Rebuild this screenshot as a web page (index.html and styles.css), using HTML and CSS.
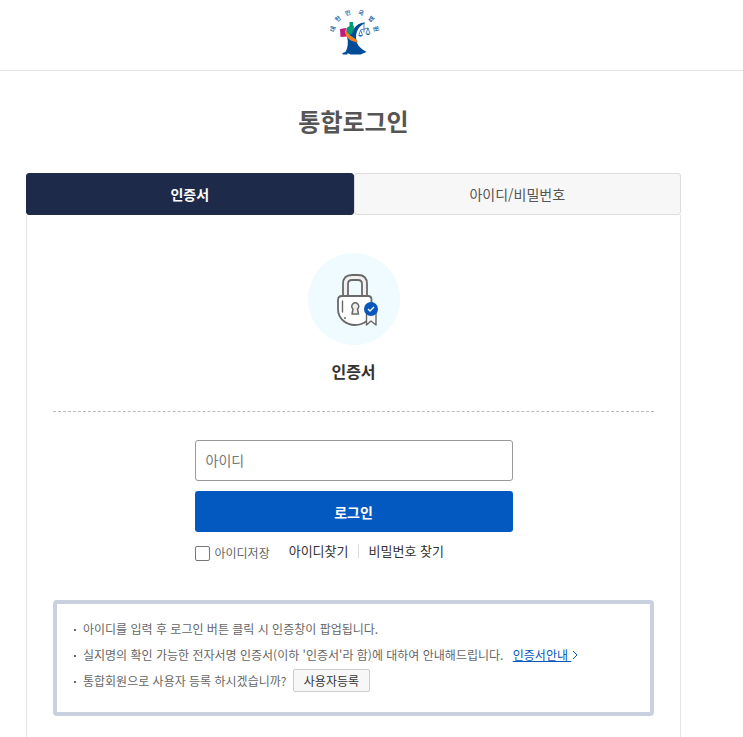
FILE: index.html
```
<!DOCTYPE html>
<html lang="ko">
<head>
  <meta charset="UTF-8"/>
  <meta name="viewport" content="width=device-width,initial-scale=1"/>
  <title>통합로그인</title>
  <link rel="stylesheet" href="styles.css">
</head>
<body>

  <header class="header">
    <a href="#" class="logo" aria-label="대한민국법원">
      <svg width="54" height="52" viewBox="0 0 54 52">
        <g class="logo-text">
          <text transform="translate(6 23) rotate(-75)" y="2">대</text>
          <text transform="translate(11 13) rotate(-45)" y="2">한</text>
          <text transform="translate(21 7) rotate(-15)" y="2">민</text>
          <text transform="translate(34 7) rotate(15)" y="2">국</text>
          <text transform="translate(44 13) rotate(45)" y="2">법</text>
          <text transform="translate(49 23) rotate(75)" y="2">원</text>
        </g>
        <path fill="#009b74" d="M22.500 16h3.500v3.500l1 .5-.5 7-3 4-4-5v-4l3-2z"/>
        <path fill="#004c97" d="M38 16.500c-5 .3-9 2.500-11 6l-2 5-5 3c1.500 6 1 11-1.500 15.500l-3 1v1.500h5v-1.500l3 1.500h10l6-2.500c-5-3-9-6-10-11-.7-4-.5-7 .5-9.500 1-3.500 4-6.500 8-8.200z"/>
        <path fill="#c2187f" d="M13 23l6-1 1.500 8.500-7 .5z"/>
        <path fill="#f08123" d="M18 22.500c1 4 4 6 7.500 8.500 3 1.500 4.500 3 5.500 5.500-5-.5-9-2.500-11.500-6-1.500-2.500-2-5.500-1.500-8z"/>
        <g fill="none" stroke="#2868a8" stroke-width=".8">
          <path d="M37 17.500v9M33.500 24l7.500-2M33.500 24l-1.500 5M33.500 24l2 5M41 22l-2 5.500M41 22l2 5.500"/>
        </g>
        <path fill="#2868a8" d="M31 29h5q-2.500 3.500-5 0zM38.500 27.500h5q-2.500 3.500-5 0z"/>
      </svg>
    </a>
  </header>

  <main class="container">
    <h1 class="title">통합로그인</h1>

    <div class="tabs" role="tablist">
      <button type="button" role="tab" class="tab active" aria-selected="true">인증서</button>
      <button type="button" role="tab" class="tab" aria-selected="false">아이디/비밀번호</button>
    </div>

    <section class="panel">
      <div class="cert">
        <div class="cert-icon">
          <svg width="48" height="56" viewBox="0 0 48 56" fill="none" stroke="#696969" stroke-width="1.8" stroke-linejoin="round">
            <path fill="#f1f1f1" d="M13 25V13Q13 4 22 4h6q9 0 9 9v12h-5V13q0-4-4-4h-6q-4 0-4 4v12z"/>
            <path fill="#fff" d="M12 25h26q3.500 0 3.500 3.500V38c0 11-8 16-16.500 16S8 48 8 38v-9q0-4 4-4z"/>
            <path stroke-linecap="round" stroke-width="1.400" d="M12.500 30v11"/>
            <circle cx="15" cy="47" r="1" fill="#696969" stroke="none"/>
            <path fill="#eee" stroke-width="1.500" d="M23 38a3.500 3.500 0 1 1 4.500 0l1 5h-6.500z"/>
            <path fill="#f7f7f7" stroke-width="1.400" d="M36.500 42v12l4.500-4 5 4V42z"/>
            <circle cx="41" cy="38" r="7" fill="#0757bd" stroke="none"/>
            <path stroke="#fff" stroke-width="1.400" d="M38 38l2 2 4-4"/>
          </svg>
        </div>
        <h2>인증서</h2>
      </div>

      <form class="login-form">
        <input type="text" class="user-id" name="userId" placeholder="아이디" aria-label="아이디">
        <button type="submit" class="btn-login">로그인</button>
        <div class="options">
          <label class="save-id" for="saveId"><input type="checkbox" id="saveId"> 아이디저장</label>
          <div class="find">
            <a href="#">아이디찾기</a>
            <a href="#">비밀번호 찾기</a>
          </div>
        </div>
      </form>

      <ul class="notice">
        <li>아이디를 입력 후 로그인 버튼 클릭 시 인증창이 팝업됩니다.</li>
        <li>실지명의 확인 가능한 전자서명 인증서(이하 '인증서'라 함)에 대하여 안내해드립니다.
          <a href="#" class="guide">인증서안내&nbsp;<svg width="8" height="10" viewBox="0 0 8 10"><path d="M2 1l4 4-4 4" fill="none" stroke="#0757bd"/></svg></a></li>
        <li>통합회원으로 사용자 등록 하시겠습니까? <button type="button" class="btn-join">사용자등록</button></li>
      </ul>
    </section>
  </main>

</body>
</html>
```

FILE: styles.css
```
* { box-sizing: border-box; margin: 0; padding: 0; }

body {
  background: #fff;
  color: #666;
  font-family: "Noto Sans CJK KR", sans-serif;
  font-size: 12px;
  overflow-x: hidden;
}

/* page scrolls without a visible bar */
html { scrollbar-width: none; }

button, input { font-family: inherit; }
a { color: #333; text-decoration: none; }

.header {
  display: flex;
  justify-content: center;
  height: 71px;
  padding: 6px 35px 0 0;
  border-bottom: 1px solid #e5e8eb;
}

.logo-text {
  font-size: 6px;
  font-weight: 700;
  fill: #2868a8;
  text-anchor: middle;
}

.container {
  margin: 0 62px 0 26px;
}

.title {
  padding: 31px 0 33px;
  color: #555;
  font-size: 24px;
  line-height: 38px;
  text-align: center;
}

.tabs { display: flex; }

.tab {
  flex: 1;
  height: 42px;
  border: 1px solid #dcdcdc;
  border-radius: 3px;
  background: #f7f7f7;
  color: #555;
  font-size: 14px;
}

.tab.active {
  border-color: #1e2a4a;
  background: #1e2a4a;
  color: #fff;
  font-weight: 700;
}

.panel {
  padding: 38px 26px;
  border: 1px solid #e3e3e3;
  border-top: 0;
}

.cert {
  padding-bottom: 27px;
  border-bottom: 1px dashed #bbb;
  text-align: center;
}

.cert-icon {
  display: flex;
  align-items: center;
  justify-content: center;
  width: 92px;
  height: 92px;
  margin: 0 auto 13px;
  border-radius: 50%;
  background: #effbfe;
}

.cert h2 {
  color: #333;
  font-size: 16px;
  font-weight: 700;
  line-height: 26px;
}

.login-form {
  max-width: 318px;
  margin: 28px auto 37px;
}

.user-id {
  display: block;
  width: 100%;
  height: 41px;
  padding: 0 10px 2px;
  border: 1px solid #999;
  border-radius: 3px;
  font-size: 14px;
}

.user-id::placeholder { color: #777; }

.btn-login {
  width: 100%;
  height: 41px;
  margin-top: 10px;
  border: 0;
  border-radius: 3px;
  background: #0459c1;
  color: #fff;
  font-size: 14px;
  font-weight: 700;
}

.options {
  display: flex;
  gap: 19px;
  margin-top: 7px;
}

.save-id {
  display: flex;
  align-items: center;
  gap: 5px;
  padding-top: 4px;
  line-height: 20px;
}

.save-id input {
  appearance: none;
  width: 15px;
  height: 15px;
  border: 1px solid #777;
  border-radius: 2px;
  background: #fff;
}

.find {
  display: flex;
  align-items: center;
  height: 24px;
  font-size: 13px;
}

.find a { line-height: 14px; }

.find a + a {
  margin-left: 9px;
  padding-left: 10px;
  border-left: 1px solid #ddd;
}

.notice {
  padding: 12px 16px 18px;
  border: 4px solid #c9d1de;
  border-radius: 4px;
  list-style: none;
}

.notice li {
  position: relative;
  padding-left: 10px;
  line-height: 26px;
}

.notice li::before {
  content: "";
  position: absolute;
  top: 13px;
  left: 1px;
  width: 2px;
  height: 2px;
  background: #666;
}

.guide {
  margin-left: 6px;
  color: #0757bd;
  text-decoration: underline;
}

.btn-join {
  height: 23px;
  margin-left: 3px;
  padding: 0 10px;
  border: 1px solid #ccc;
  border-radius: 2px;
  background: #f7f7f7;
  color: #333;
  font-size: 12px;
}
```
